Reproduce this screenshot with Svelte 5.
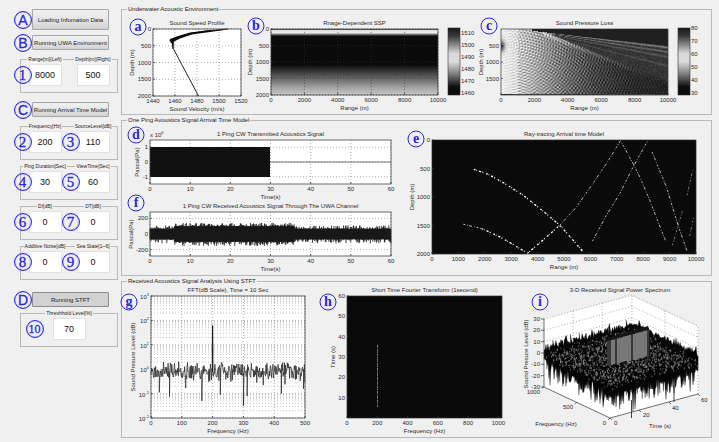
<script>
  // Small seeded generator so that every noise trace is drawn the same way each time.
  function seeded(seed) {
    let s = seed;
    return () => {
      s = (s * 1664525 + 1013904223) % 4294967296;
      return s / 4294967296;
    };
  }
  const r1 = (v) => Math.round(v * 10) / 10;

  let groups = $state([
    { after: 'env', fields: [{ n: 1, label: 'Range[m](Left)', value: '8000' }, { label: 'Depth[m](Right)', value: '500' }] },
    { after: 'arrival', fields: [{ n: 2, label: 'Frequency[Hz]', value: '200' }, { n: 3, label: 'SourceLevel[dB]', value: '110' }] },
    { after: 'arrival', fields: [{ n: 4, label: 'Ping Duration[Sec]', value: '30' }, { n: 5, label: 'ViewTime[Sec]', value: '60' }] },
    { after: 'arrival', fields: [{ n: 6, label: 'DI[dB]', value: '0' }, { n: 7, label: 'DT[dB]', value: '0' }] },
    { after: 'arrival', fields: [{ n: 8, label: 'Additive Noise[dB]', value: '0' }, { n: 9, label: 'Sea State[1~6]', value: '0' }] },
    { after: 'stft', fields: [{ n: 10, label: 'Threshhold Level[%]', value: '70', apart: true }] }
  ]);

  const km = [0, 2000, 4000, 6000, 8000, 10000];
  const secs = [0, 10, 20, 30, 40, 50, 60];

  const ssp = { x: 153, y: 29, w: 88, h: 67, title: 'Sound Speed Profile', xlabel: 'Sound Velocity (m/s)', ylabel: 'Depth (m)', yx: 134,
    xr: [1440, 1520], xt: [1440, 1460, 1480, 1500, 1520], yr: [2000, 0], yt: [0, 500, 1000, 1500, 2000], grid: true };
  const range = { x: 271, y: 29, w: 167, h: 66, title: 'Rnage-Dependent SSP', xlabel: 'Range (m)', ylabel: 'Depth (m)', yx: 252,
    xr: [0, 10000], xt: km, yr: [2000, 0], yt: [0, 500, 1000, 1500, 2000], grid: true };
  const loss = { x: 501, y: 29, w: 167, h: 66, title: 'Sound Pressure Loss', xlabel: 'Range (m)', ylabel: 'Depth (m)', yx: 483,
    xr: [0, 10000], xt: km, yr: [2000, 0], yt: [500, 1000, 1500] };
  const sent = { x: 150, y: 140, w: 241, h: 44, title: '1 Ping CW Transmitted Acoustics Signal', xlabel: 'Time(s)', ylabel: 'Pascal(Pa)', yx: 139,
    xr: [0, 60], xt: secs, yr: [-1.5, 1.5], yt: [-1, 0, 1], grid: true };
  const received = { x: 150, y: 212, w: 241, h: 44, title: '1 Ping CW Received Acoustics Signal Through The UWA Channel', xlabel: 'Time(s)', ylabel: 'Pascal(Pa)', yx: 133,
    xr: [0, 60], xt: secs, yr: [-280, 280], yt: [-200, 0, 200], grid: true };
  const rays = { x: 432, y: 140, w: 264, h: 114, title: 'Ray-tracing Arrival time Model', xlabel: 'Range (m)', ylabel: 'Depth (m)', yx: 414,
    xr: [0, 10000], xt: [0, 1000, 2000, 3000, 4000, 5000, 6000, 7000, 8000, 9000, 10000], yr: [2000, 0], yt: [0, 500, 1000, 1500, 2000] };
  const fft = { x: 151, y: 296, w: 154, h: 122, title: 'FFT(dB Scale), Time = 10 Sec', xlabel: 'Frequency (Hz)', ylabel: 'Sound Presure Level (dB)', yx: 135,
    xr: [0, 500], xt: [0, 100, 200, 300, 400, 500], yr: [-2, 3], yt: [-2, -1, 0, 1, 2, 3], grid: true, log: true };
  const stft = { x: 347, y: 296, w: 155, h: 122, title: 'Short Time Fourier Transform (1secend)', xlabel: 'Frequency (Hz)', ylabel: 'Time (s)', yx: 335,
    xr: [0, 1024], xt: [0, 200, 400, 600, 800, 1000], yr: [0, 60], yt: [10, 20, 30, 40, 50, 60] };

  const px = (c, v) => r1(c.x + ((v - c.xr[0]) / (c.xr[1] - c.xr[0])) * c.w);
  const py = (c, v) => r1(c.y + c.h - ((v - c.yr[0]) / (c.yr[1] - c.yr[0])) * c.h);

  // Interference field of the loss plot, one path per grey level.
  const levels = (() => {
    const out = Array.from({ length: 16 }, () => '');
    const rnd = seeded(5);
    for (let j = 0; j < 66; j++) {
      for (let i = 0; i < 167; i++) {
        const r = i / 167;
        const d = j / 66;
        const dist = (a) => Math.hypot(r * 2.5, d - a);
        const wave = Math.cos(150 * dist(0.25)) - Math.cos(150 * dist(-0.25)) + 0.8 * Math.cos(150 * dist(1.75)) - 0.6 * Math.cos(150 * dist(2.25));
        const top = 0.02 + (r - 0.18) * 0.28;
        const low = (r - 0.22) * 1.02;
        let v;
        if (r > 0.18 && d < top) v = 30;
        else if (r > 0.3 && d < low) {
          v = 46 + 14 * rnd();
          const k = (d - top) / (r - 0.15);
          const ray = (a, w) => Math.exp(-(((k - a) / w) ** 2));
          v += 70 * ray(0.03, 0.02) + 50 * ray(0.11, 0.02) + 32 * ray(0.2, 0.02) + 22 * ray(0.36, 0.02);
        } else {
          const base = 34 + 180 * Math.exp(-Math.pow(r / 0.42, 1.7));
          v = base + wave * Math.min(30, r * 260) * (r > 0.5 ? Math.max(0.2, 1.8 - r * 1.8) : 1) * 0.7;
        }
        if (r > 0.25) v += 60 * Math.exp(-(((d - low - 0.03) / 0.03) ** 2)) * Math.max(0.1, 1.1 - r * 1.1);
        if (r < 0.1) v += 20;
        v -= 170 * Math.exp(-((r / 0.02) ** 2) - ((d - 0.25) / 0.08) ** 2);
        if (j > 64) v = 30 + 60 * rnd();
        const q = Math.max(1, Math.min(15, Math.round(v / 16)));
        out[q] += `M${i} ${j}h1v1h-1z`;
      }
    }
    return out;
  })();

  const receivedPath = (() => {
    const rnd = seeded(11);
    let d = '';
    for (let x = 0; x < 241; x += 0.4) {
      const t = (x / 241) * 60;
      const a = t > 6 && t < 36 ? 98 : 66;
      const up = a + Math.pow(rnd(), 4) * 45;
      const dn = a + Math.pow(rnd(), 4) * 55;
      d += `M${r1(150 + x)} ${py(received, up)}V${py(received, -dn)}`;
    }
    return d;
  })();

  const fftPath = (() => {
    const rnd = seeded(23);
    let d = '';
    for (let f = 0; f <= 500; f += 1.5) {
      let v = -0.06 + (rnd() + rnd() - 1) * 0.4;
      if (rnd() < 0.1) v -= rnd() * 0.5;
      d += `${d ? 'L' : 'M'}${px(fft, f)} ${py(fft, v)}`;
      const dip = { 27: -0.95, 60: -1.12, 165: -1.3, 225: -1.05, 300: -1.5, 312: -1.1, 423: -1.0, 495: -0.8 }[f];
      if (dip) d += `V${py(fft, dip)}`;
      if (f === 199.5) d += `L${px(fft, 199)} ${py(fft, 0.8)}L${px(fft, 200)} ${py(fft, 1.8)}L${px(fft, 201)} ${py(fft, 0.8)}`;
    }
    return d;
  })();
  const minor = [];
  for (let e = -2; e < 3; e++) for (let m = 2; m < 10; m++) minor.push(e + Math.log10(m));

  // Isometric projection of the power spectrum: f runs to the left, t to the right, z in dB.
  const iso = (f, t, z) => [r1(610 - 66 * f + 88 * t), r1(418 - 31 * f - 24 * t - (68 * (z + 30)) / 60)];
  const at = (f, t, z) => iso(f, t, z).join(' ');
  const slices = (() => {
    const rnd = seeded(42);
    const out = [];
    for (let k = 30; k >= 0; k--) {
      const t = k / 30;
      const up = [];
      const down = [];
      for (let i = 0; i <= 66; i++) {
        const f = i / 66;
        up.push(at(f, t, 2 + rnd() * 5 + Math.pow(rnd(), 5) * 5));
        down.unshift(at(f, t, -4 - rnd() * 5 - Math.pow(rnd(), 4) * 19));
      }
      out.push('M' + up.concat(down).join('L') + 'z');
    }
    const up = [];
    const down = [];
    for (let i = 0; i <= 88; i++) {
      up.push(at(0, i / 88, 1 + rnd() * 4));
      down.unshift(at(0, i / 88, -5 - rnd() * 6 - Math.pow(rnd(), 4) * 21));
    }
    out.push('M' + up.concat(down).join('L') + 'z');
    return out;
  })();
  const specks = (() => {
    const rnd = seeded(77);
    let d = '';
    for (let i = 0; i < 1300; i++) {
      const [x, y] = iso(rnd(), rnd(), rnd() * 8 - 5);
      d += `M${x} ${y}v${r1(0.5 + rnd() * 1.8)}`;
    }
    return d;
  })();
  const ridge = (() => {
    const rnd = seeded(9);
    return Array.from({ length: 21 }, (_, i) => ({ x: 608 + i * 2, y: r1(341 - i * 0.55), b: r1(365 - i * 0.45 + rnd() * 2), c: rnd() < 0.25 ? '#444' : '#999' }));
  })();
</script>

{#snippet badge(x, y, ch)}
  <circle class="ring" cx={x} cy={y} r="8" />
  <text class="mark" {x} y={y + 4}>{ch}</text>
{/snippet}

{#snippet frame(c)}
  {#if c.grid}
    {#each c.xt as v}<path class="dots" d="M{px(c, v)} {c.y}v{c.h}" />{/each}
    {#each c.yt as v}<path class="dots" d="M{c.x} {py(c, v)}h{c.w}" />{/each}
  {/if}
{/snippet}

{#snippet axes(c)}
  <rect class="axis" x={c.x} y={c.y} width={c.w} height={c.h} />
  <text class="mid" x={c.x + c.w / 2} y={c.y - 4}>{c.title}</text>
  {#each c.xt as v}
    <path class="axis" d="M{px(c, v)} {c.y + c.h}v-2" />
    <text class="mid" x={px(c, v)} y={c.y + c.h + 7}>{v}</text>
  {/each}
  {#each c.yt as v}
    <path class="axis" d="M{c.x} {py(c, v)}h2" />
    {#if c.log}
      <text class="end" x={c.x - 2} y={py(c, v) + 3}>10<tspan class="sup" dy="-3">{v}</tspan></text>
    {:else}
      <text class="end" x={c.x - 2} y={py(c, v) + 2}>{v}</text>
    {/if}
  {/each}
  <text class="mid" x={c.x + c.w / 2} y={c.y + c.h + 15}>{c.xlabel}</text>
  <text class="mid" transform="translate({c.yx} {c.y + c.h / 2}) rotate(-90)">{c.ylabel}</text>
{/snippet}

{#snippet colorbar(x, ticks, top, step)}
  <rect x={x} y="28" width="12" height="67" fill="url(#bar)" stroke="#333" stroke-width="0.6" />
  {#each ticks as v, i}<text x={x + 13} y={top + i * step + 2}>{v}</text>{/each}
{/snippet}

{#snippet inputs(key)}
  {#each groups.filter((g) => g.after === key) as g}
    <div class="group">
      {#each g.fields as f}
        <label class="field">
          <span class="caption">{f.label}</span>
          <span class="box">
            <input type="text" bind:value={f.value} />
            {#if f.n}<span class="badge num" class:apart={f.apart} class:two={f.n > 9}>{f.n}</span>{/if}
          </span>
        </label>
      {/each}
    </div>
  {/each}
{/snippet}

<div class="app">
  <aside>
    <div class="action tall"><button type="button">Loading Infomation Data</button><span class="badge">A</span></div>
    <div class="action"><button type="button">Running UWA Environment</button><span class="badge">B</span></div>
    <div class="stack">{@render inputs('env')}</div>
    <div class="action"><button type="button">Running Arrival Time Model</button><span class="badge">C</span></div>
    <div class="stack">{@render inputs('arrival')}</div>
    <div class="action last"><button type="button">Running STFT</button><span class="badge">D</span></div>
    <div class="stack close">{@render inputs('stft')}</div>
  </aside>

  <main>
    <fieldset>
      <legend>Underwater Acoustic Environment</legend>
      <div class="row environment">
        <svg viewBox="122 14 125 100">
          <rect x="153" y="29" width="88" height="67" fill="#fff" />
          {@render frame(ssp)}
          <path d="M228 29L205 31L190 33.500L179 37L173.500 41L173 48L198.500 96" fill="none" stroke="#222" stroke-width="1" />
          <path d="M228 29.500L207 30.500L190 32.500L178 36L170 39L169.500 41L172 44L172.500 49L173.500 48L173 42L180 38.500L192 34.500Z" fill="#0a0a0a" />
          {@render axes(ssp)}
          {@render badge(138, 27, 'a')}
        </svg>
        <svg viewBox="247 14 228 100">
          <defs>
            <linearGradient id="water" x1="0" y1="0" x2="0" y2="1">
              <stop offset="0" stop-color="#222" /><stop offset="0.02" stop-color="#ddd" />
              <stop offset="0.06" stop-color="#eee" /><stop offset="0.08" stop-color="#777" />
              <stop offset="0.11" stop-color="#0a0a0a" /><stop offset="0.54" stop-color="#0a0a0a" />
              <stop offset="0.75" stop-color="#666" /><stop offset="0.9" stop-color="#a8a8a8" />
              <stop offset="1" stop-color="#c8c8c8" />
            </linearGradient>
            <linearGradient id="bar" x1="0" y1="0" x2="0" y2="1">
              <stop offset="0" stop-color="#161616" /><stop offset="0.12" stop-color="#3a3a3a" />
              <stop offset="0.38" stop-color="#d8d8d8" /><stop offset="0.5" stop-color="#dcdcdc" />
              <stop offset="0.7" stop-color="#777" /><stop offset="0.87" stop-color="#101010" />
              <stop offset="1" stop-color="#080808" />
            </linearGradient>
          </defs>
          <rect x="271" y="29" width="167" height="66" fill="url(#water)" />
          <g class="faint">{@render frame(range)}</g>
          {@render axes(range)}
          {@render colorbar(448, [1510, 1500, 1490, 1480, 1470, 1460], 33, 12)}
          {@render badge(256, 26, 'b')}
        </svg>
        <svg viewBox="475 14 236 100">
          <rect x="501" y="29" width="167" height="66" fill="#222" />
          <g transform="translate(501 29)" shape-rendering="crispEdges">
            {#each levels as d, i}<path {d} fill="rgb({i * 16},{i * 16},{i * 16})" />{/each}
          </g>
          {@render axes(loss)}
          {@render colorbar(678, [80, 70, 60, 50, 40, 30], 28, 13)}
          {@render badge(489, 26, 'c')}
        </svg>
      </div>
    </fieldset>

    <fieldset>
      <legend>One Ping Avoustics Signal Arrival Time Model</legend>
      <div class="row arrival">
        <div class="pair">
          <svg viewBox="122 125 278 75">
            <rect x="150" y="140" width="241" height="44" fill="#fff" />
            {@render frame(sent)}
            <rect x="150" y="147" width="120" height="30" fill="#111" />
            <path d="M270 162h121" stroke="#555" stroke-width="0.8" />
            {@render axes(sent)}
            <text x="150" y="137">x 10<tspan class="sup" dy="-3">6</tspan></text>
            {@render badge(136, 135, 'd')}
          </svg>
          <svg viewBox="122 200 278 75">
            <rect x="150" y="212" width="241" height="44" fill="#fff" />
            {@render frame(received)}
            <path d={receivedPath} stroke="#0c0c0c" stroke-width="0.8" />
            {@render axes(received)}
            {@render badge(136, 203, 'f')}
          </svg>
        </div>
        <svg viewBox="400 125 311 150">
          <rect x="432" y="140" width="264" height="114" fill="#0a0a0a" />
          <g class="ray" transform="translate(400 112) scale(0.333)">
            <path class="bright" d="M222 172L265 187L310 212L370 250L430 298L480 340L520 385L548 418" />
            <path class="bright" d="M245 350L300 375L340 398L383 424L430 384L480 340" />
            <path d="M190 337L245 350M480 340L530 285L570 228L620 155L662 86L700 155L720 195L750 265L775 330L797 385" />
            <path d="M578 388L620 310L660 245L700 165L743 88" />
            <path d="M757 120L800 225L835 340L862 418" />
            <path class="dim" d="M818 400L848 298M862 250L880 170M870 372L882 315" />
          </g>
          {@render axes(rays)}
          {@render badge(416, 139, 'e')}
        </svg>
      </div>
    </fieldset>

    <fieldset>
      <legend>Received Acoustics Signal Analysis Using STFT</legend>
      <div class="row spectrum">
        <svg viewBox="122 286 196 151">
          <rect x="151" y="296" width="154" height="122" fill="#fff" />
          {#each minor as v}<path class="dots fine" d="M151 {py(fft, v)}h154" />{/each}
          {@render frame(fft)}
          <path d={fftPath} fill="none" stroke="#222" stroke-width="0.7" />
          <path d="M212.500 372V326" stroke="#222" stroke-width="1.200" />
          {@render axes(fft)}
          {@render badge(129, 302, 'g')}
        </svg>
        <svg viewBox="318 286 190 151">
          <rect x="347" y="296" width="155" height="122" fill="#0a0a0a" />
          <path d="M377.500 345V407" stroke="#8a8a8a" stroke-width="1" stroke-dasharray="2 0.600 1 1" />
          {@render axes(stft)}
          {@render badge(328, 302, 'h')}
        </svg>
        <svg viewBox="508 286 203 151">
          <path d="M544 319L631 296L698 327V394L610 418L544 387Z" fill="#fff" />
          {#each [10, 20, 30] as z}<path class="dots" d="M{at(1, 0, z)}L{at(1, 1, z)}L{at(0, 1, z)}" />{/each}
          <path class="dots" d="M{at(1, 1, -30)}L{at(1, 1, 30)}M{at(1, 0.33, 0)}L{at(1, 0.33, 30)}M{at(1, 0.66, 0)}L{at(1, 0.66, 30)}M{at(0.5, 1, 0)}L{at(0.5, 1, 30)}M{at(0, 1, -30)}L{at(0, 1, 30)}" />
          {#each slices as d}<path {d} fill="#050505" stroke="#111" stroke-width="0.3" />{/each}
          <path d="M631.500 400V418M674 385V402" stroke="#111" stroke-width="0.8" />
          <path d={specks} stroke="#a8a8a8" stroke-width="0.6" />
          <path d="M607 338L648 326L650 331V357L607 367Z" fill="#161616" />
          {#each ridge as s}<path d="M{s.x} {s.y}V{s.b}" stroke={s.c} stroke-width="1.500" />{/each}
          <path class="axis" d="M544 319V387L610 418L698 394" />
          {#each [30, 20, 10, 0, -10, -20, -30] as z, i}
            <path class="axis" d="M{at(1, 0, z)}h-3" />
            <text class="end" x="540" y={r1(321 + i * 11.3)}>{z}</text>
          {/each}
          <path class="axis" d="M544 387l-2 1M577 402l-2 2M610 418l-2 2M610 418l2 2M639 410l2 2M669 402l2 2M698 394l2 2" />
          <text class="end" x="540" y="394">1000</text>
          <text class="end" x="573" y="409">500</text>
          <text class="end" x="606" y="425">0</text>
          <text x="614" y="425">0</text>
          <text x="643" y="417">20</text>
          <text x="672" y="410">40</text>
          <text x="701" y="402">60</text>
          <text class="mid" x="556" y="426">Frequency (Hz)</text>
          <text class="mid" x="660" y="428">Time (s)</text>
          <text class="mid" x="620" y="292">3-D Received Signal Power Spectrum</text>
          <text class="mid" transform="translate(528 354) rotate(-90)">Sound Presure Level (dB)</text>
          {@render badge(540, 302, 'i')}
        </svg>
      </div>
    </fieldset>
  </main>
</div>

<style>
  :global(body) {
    background: #f0f0f0;
  }
  .app {
    display: flex;
    align-items: flex-start;
    font-family: 'Liberation Sans', Arial, sans-serif;
    font-size: 6px;
    color: #222;
  }
  aside {
    flex: none;
    box-sizing: border-box;
    width: 121px;
    padding: 9px 3px 0 20px;
  }
  .action {
    position: relative;
    height: 15px;
    margin: 0 9px 0 12px;
  }
  .tall {
    height: 21px;
    margin-bottom: 5px;
  }
  .last {
    margin-top: 12px;
  }
  button {
    display: block;
    box-sizing: border-box;
    width: 100%;
    height: 100%;
    padding: 0;
    border: 1px solid #a6a6a6;
    border-radius: 1px;
    background: linear-gradient(#f1f1f1, #e6e6e6 50%, #d2d2d2);
    font: inherit;
    color: #222;
    white-space: nowrap;
  }
  .last button {
    background: #d2d2d2;
    border-color: #8c8c8c;
  }
  .stack {
    display: flex;
    flex-direction: column;
    gap: 6px;
    margin: 9px 0;
  }
  .close {
    margin-top: 6px;
  }
  .group {
    display: flex;
    padding-bottom: 6px;
    border: 1px solid #b9b9b9;
  }
  .field {
    flex: 1 1 0;
    display: flex;
    flex-direction: column;
    align-items: center;
    gap: 1px;
    margin-top: -5px;
  }
  .caption {
    padding: 0 1px;
    background: #f0f0f0;
    font-size: 5px;
    line-height: 8px;
    white-space: nowrap;
  }
  .box {
    position: relative;
    width: 33px;
    height: 22px;
  }
  input {
    display: block;
    box-sizing: border-box;
    width: 100%;
    height: 100%;
    padding: 0;
    border: 1px solid #e2e2e2;
    background: #fff;
    font: inherit;
    font-size: 9px;
    color: #111;
    text-align: center;
  }
  .badge {
    position: absolute;
    top: 50%;
    left: -9px;
    box-sizing: border-box;
    width: 18px;
    height: 18px;
    border: 1px solid #2a26dc;
    border-radius: 50%;
    box-shadow: inset 0 0 1px #2a26dc;
    transform: translate(-50%, -50%);
    font-size: 14px;
    line-height: 16px;
    text-align: center;
    color: #2a26dc;
    -webkit-text-stroke: 0.3px #2a26dc;
  }
  .num {
    left: -6px;
    font-family: 'Liberation Serif', 'Times New Roman', serif;
    font-size: 15px;
  }
  .two {
    font-size: 12px;
  }
  .apart {
    left: -18px;
  }
  main {
    flex: 1;
    min-width: 0;
    padding: 4px 7px 4px 0;
  }
  fieldset {
    min-width: 0;
    margin: 0;
    padding: 0;
    border: 1px solid #b9b9b9;
  }
  legend {
    margin-left: 5px;
    padding: 0 1px;
    line-height: 10px;
  }
  .row {
    display: grid;
  }
  .environment {
    grid-template-columns: 125fr 228fr 236fr;
  }
  .arrival {
    grid-template-columns: 278fr 311fr;
  }
  .spectrum {
    grid-template-columns: 196fr 190fr 203fr;
  }
  .pair {
    display: flex;
    flex-direction: column;
  }
  svg {
    display: block;
    width: 100%;
    overflow: visible;
  }
  text {
    font-size: 6px;
    fill: #2a2a2a;
  }
  .mid {
    text-anchor: middle;
  }
  .end {
    text-anchor: end;
  }
  .sup {
    font-size: 4px;
  }
  .axis {
    fill: none;
    stroke: #333;
    stroke-width: 0.7;
  }
  .dots {
    fill: none;
    stroke: #777;
    stroke-width: 0.6;
    stroke-dasharray: 1 2;
  }
  .faint .dots {
    stroke: #333;
  }
  .fine {
    stroke: #888;
    stroke-width: 0.5;
  }
  .ray path {
    fill: none;
    stroke: #bbb;
    stroke-width: 3;
    stroke-dasharray: 6 5 3 4 9 7 2 5;
  }
  .ray .bright {
    stroke: #fff;
    stroke-width: 4;
    stroke-dasharray: 5 3 2 6 7 4 3 9;
  }
  .ray .dim {
    stroke: #777;
  }
  .ring {
    fill: none;
    stroke: #2a26dc;
  }
  .mark {
    font-family: 'Liberation Serif', 'Times New Roman', serif;
    font-size: 14px;
    font-weight: bold;
    fill: #2a26dc;
    text-anchor: middle;
  }
</style>
